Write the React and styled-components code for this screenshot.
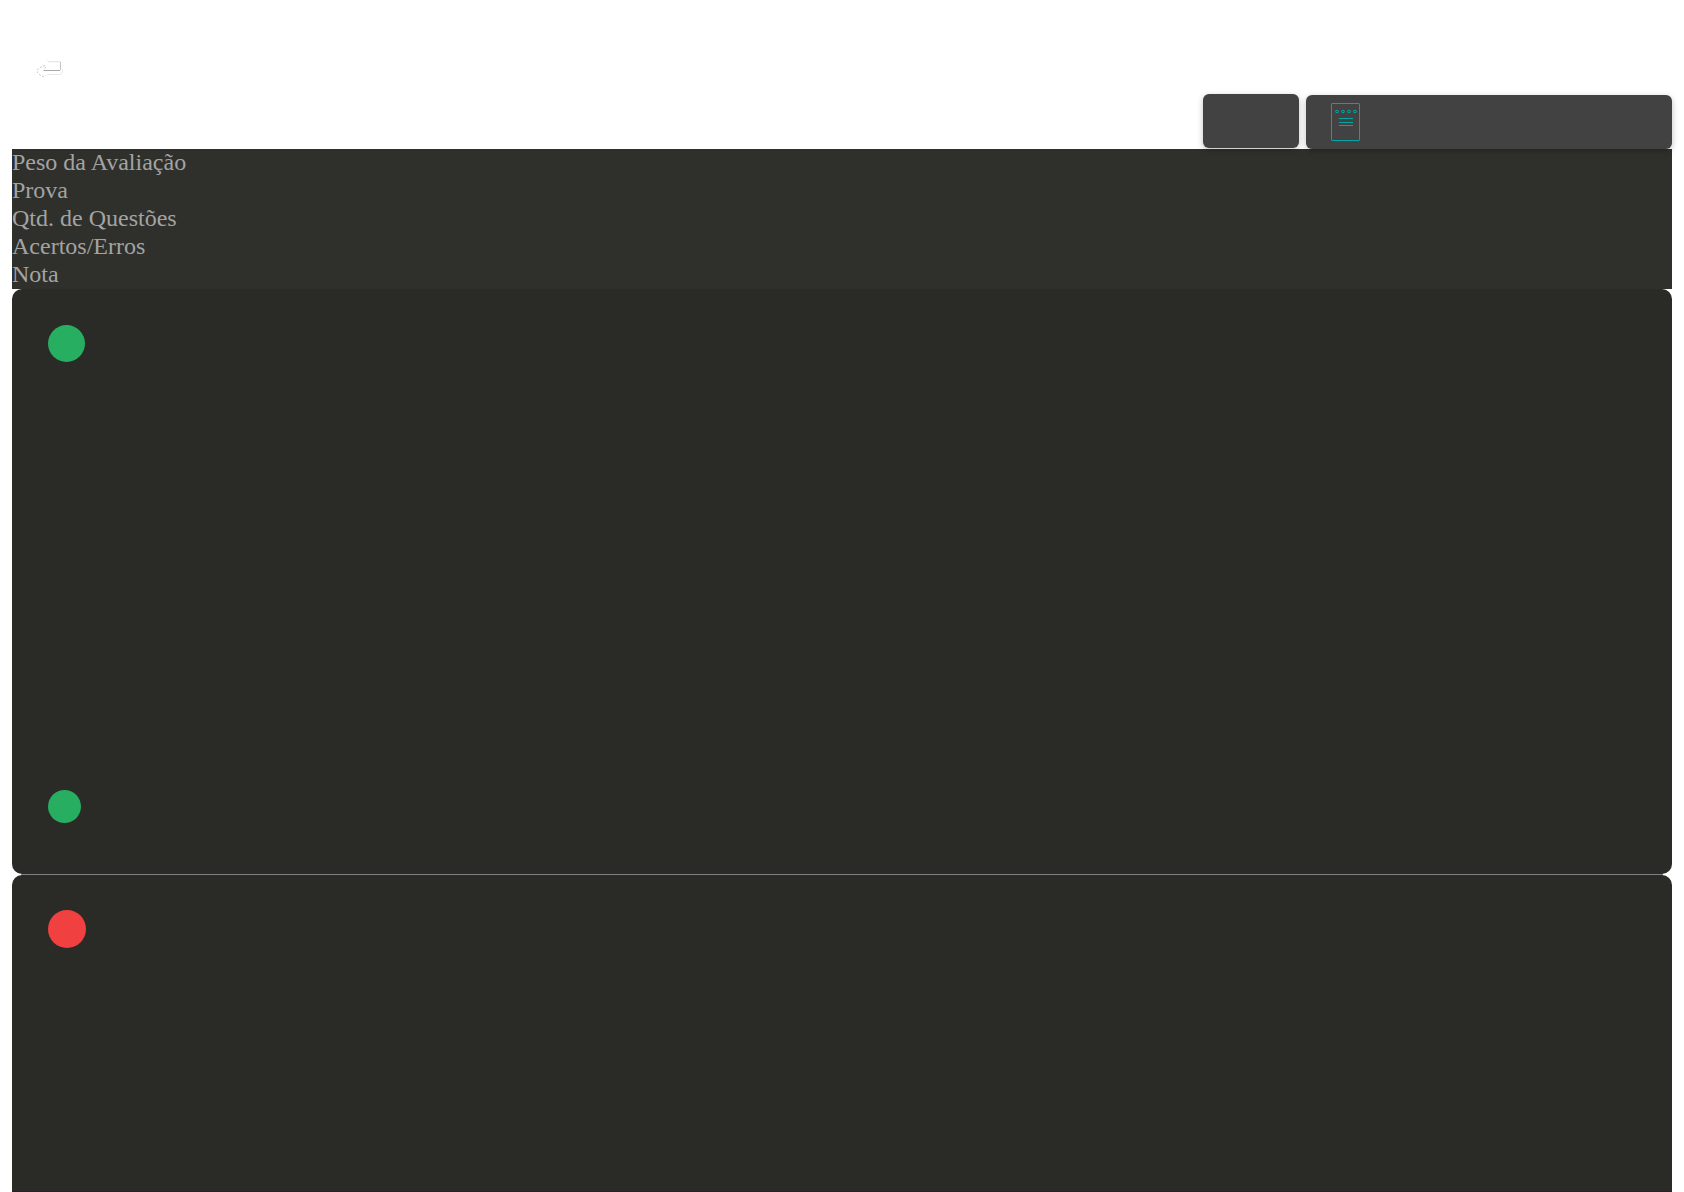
import styled, { createGlobalStyle } from "styled-components";

const labels = [
  "Peso da Avaliação",
  "Prova",
  "Qtd. de Questões",
  "Acertos/Erros",
  "Nota",
];

export default function App() {
  return (
    <>
      <GlobalStyle />
      <Page>
        <Header>
          <BackLink href="#" aria-label="Voltar">
            <BackIcon />
          </BackLink>
          <Actions>
            <ActionButton type="button" aria-label="Opções" $width="96px" />
            <ActionButton
              type="button"
              aria-label="Gabarito"
              $width="366px"
              $align="flex-end"
            >
              <NotepadIcon />
            </ActionButton>
          </Actions>
        </Header>
        <Summary>
          {labels.map((label) => (
            <SummaryItem key={label}>{label}</SummaryItem>
          ))}
        </Summary>
        <Question $height="585px">
          <Status $size="37px" $color="#27ae60" />
          <Status $size="33px" $color="#27ae60" />
        </Question>
        <Divider />
        <Question $last>
          <Status $size="38px" $color="#f04040" />
        </Question>
      </Page>
    </>
  );
}

const BackIcon = () => (
  <svg width="30" height="20" viewBox="0 0 30 20" fill="none">
    <path d="M11.500 1.500l1.500 1.200h11.500" stroke="#d4d4d4" strokeWidth="0.700" />
    <path d="M24.500 3v8" stroke="#b4b4b4" strokeWidth="0.800" />
    <path d="M7.500 11.500h16.500" stroke="#a8a8a8" />
    <path d="M11 15.500h13l2.500-2v-3" stroke="#dedede" strokeWidth="0.700" />
    <path
      d="M10 8L7 10.500M9 6.500L5 8 1.500 10.500v3L4 16l3 1.500 3-1"
      stroke="#b8b8b8"
      strokeWidth="0.800"
      strokeDasharray="2 1.500"
    />
  </svg>
);

const NotepadIcon = () => (
  <svg width="30" height="38" viewBox="0 0 30 38" fill="none" stroke="#00a6a6">
    <rect x="0.500" y="0.500" width="28" height="37" rx="0.500" />
    {[6, 12, 18, 24].map((x) => (
      <ellipse key={x} cx={x} cy="8.500" rx="1.500" ry="1.200" />
    ))}
    <path d="M8 15.500h14M8 19.500h14M8 22.500h14" />
  </svg>
);

const GlobalStyle = createGlobalStyle`
  * {
    box-sizing: border-box;
  }

  body {
    margin: 0;
    background: #ffffff;
    font-family: "Liberation Serif", serif;
    font-size: 24px;
  }
`;

const Page = styled.main`
  display: flex;
  flex-direction: column;
  min-height: 100vh;
  padding: 0 12px;
`;

/* stacked above the summary so the button shadows fall on it */
const Header = styled.header`
  position: relative;
  z-index: 1;
  display: flex;
  flex-direction: column;
  justify-content: space-between;
  height: 149px;
  padding-top: 59px;
`;

const BackLink = styled.a`
  display: flex;
  width: 30px;
  height: 20px;
  margin-left: 24px;
`;

const Actions = styled.div`
  display: flex;
  justify-content: flex-end;
  gap: 7px;
  height: 55px;
`;

const ActionButton = styled.button`
  display: flex;
  align-items: center;
  align-self: ${({ $align }) => $align || "flex-start"};
  width: ${({ $width }) => $width};
  height: 54px;
  padding: 0 25px;
  border: none;
  border-radius: 6px;
  background: #424242;
  box-shadow: 0 2px 6px rgba(0, 0, 0, 0.25);
  cursor: pointer;
`;

const Summary = styled.ul`
  margin: 0;
  padding: 0;
  list-style: none;
  background: #2f302c;
  color: #a3a3a3;
`;

const SummaryItem = styled.li`
  padding-bottom: 2px;
  line-height: 26px;
`;

const Question = styled.section`
  display: flex;
  flex-direction: column;
  justify-content: space-between;
  flex: ${({ $last }) => ($last ? "1" : "none")};
  height: ${({ $height }) => $height || "auto"};
  padding: ${({ $last }) => ($last ? "35px 36px" : "36px 36px 51px")};
  border-bottom: ${({ $last }) => ($last ? "1px solid #2c1f27" : "none")};
  border-radius: ${({ $last }) => ($last ? "10px 10px 0 0" : "10px")};
  background: #2a2b27;
`;

const Status = styled.span`
  width: ${({ $size }) => $size};
  height: ${({ $size }) => $size};
  border-radius: 50%;
  background: ${({ $color }) => $color};
`;

const Divider = styled.hr`
  align-self: stretch;
  height: 1px;
  margin: 0 9px;
  border: none;
  background: #808080;
`;
